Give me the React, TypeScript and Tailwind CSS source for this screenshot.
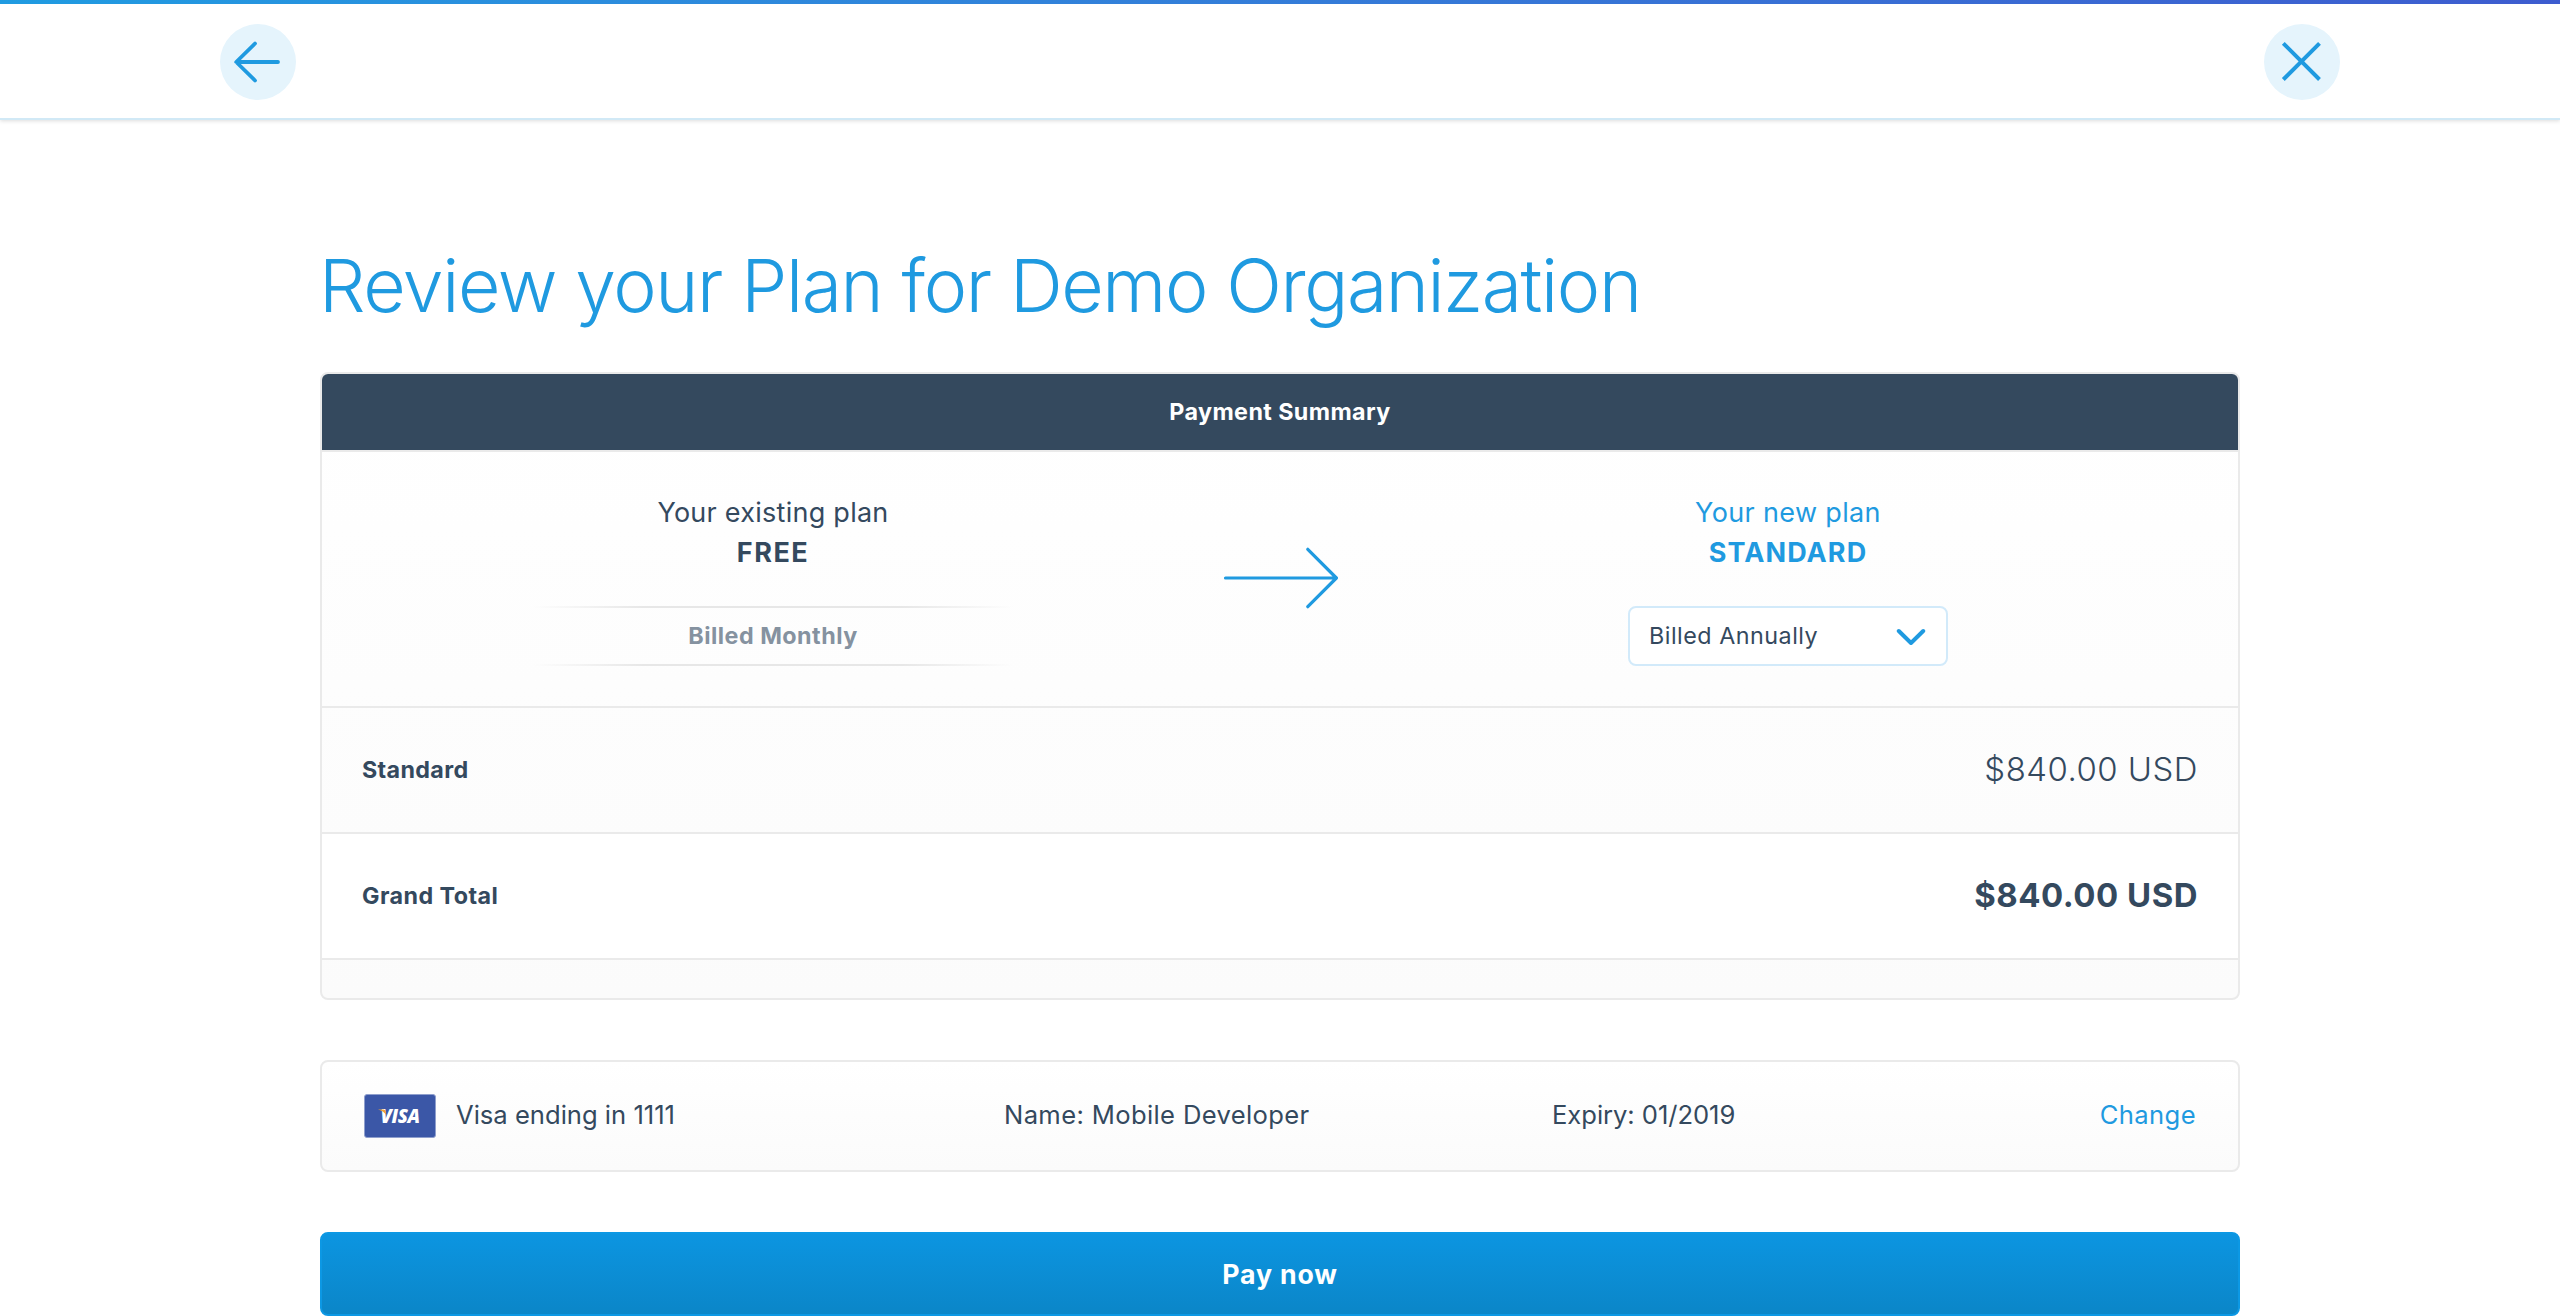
import React from "react";

function Header() {
  return (
    <header className="h-[120px] border-b-2 border-[#d1e9f6] bg-white shadow-[0_1px_4px_rgba(0,0,0,0.14)]">
      <div className="h-1 bg-linear-to-r from-[#1f9be1] to-[#3d5ccf]" />
      <div className="flex justify-between px-[220px] pt-5">
        <button aria-label="Back" className="size-[76px] rounded-full bg-[#e5f4fc]">
          <svg viewBox="0 0 76 76" className="size-full" fill="none" stroke="#1f9ae0" strokeWidth="3.8" strokeLinecap="round" strokeLinejoin="round">
            <path d="M35 19.5 16.2 38 35 56.5M16.5 38H58" />
          </svg>
        </button>
        <button aria-label="Close" className="size-[76px] rounded-full bg-[#e5f4fc]">
          <svg viewBox="0 0 76 76" className="size-full" fill="none" stroke="#1f9ae0" strokeWidth="4" strokeLinecap="butt">
            <path d="M19.3 19.3 55.5 55.5M55.5 19.3 19.3 55.5" />
          </svg>
        </button>
      </div>
    </header>
  );
}

function FadingRule() {
  return <div className="h-0.5 bg-[linear-gradient(90deg,transparent,#e7e7e7_23%,#e7e7e7_77%,transparent)]" />;
}

function PlanChange() {
  return (
    <div className="flex h-[258px] items-start border-y-2 border-[#eaeaea] pt-[41px]">
      <div className="flex w-[902px] flex-col items-center">
        <div className="text-[27px] leading-10 tracking-[0.26px]">Your existing plan</div>
        <div className="text-[27px] font-bold leading-10 tracking-[1.51px]">FREE</div>
        <div className="mt-[33px] flex h-[60px] w-[480px] flex-col">
          <FadingRule />
          <div className="flex-1 text-center text-[23.3px] font-bold leading-[56px] tracking-[0.49px] text-[#8592a0]">Billed Monthly</div>
          <FadingRule />
        </div>
      </div>
      <svg viewBox="0 0 116 64" className="-ml-0.5 mt-[53px] h-16 w-[116px]" fill="none" stroke="#1f9ae0" strokeWidth="3.2" strokeLinecap="round" strokeLinejoin="round">
        <path d="M3.5 32H114M85.8 3.3 114.4 32 85.8 60.7" />
      </svg>
      <div className="flex w-[900px] flex-col items-center text-[#1f9ae0]">
        <div className="text-[27px] leading-10 tracking-[0.35px]">Your new plan</div>
        <div className="text-[27px] font-bold leading-10 tracking-[1.1px]">STANDARD</div>
        <button className="mt-[33px] flex h-[60px] w-[320px] items-center justify-between rounded-lg border-2 border-[#d2eafa] bg-white pl-[19px] pr-5 text-[#34495e]">
          <span className="text-[23.3px] tracking-[0.51px]">Billed Annually</span>
          <svg viewBox="0 0 30 18" className="h-[18px] w-[30px]" fill="none" stroke="#1f9ae0" strokeWidth="4" strokeLinecap="round" strokeLinejoin="round">
            <path d="M2.8 4 15 16 27.2 4" />
          </svg>
        </button>
      </div>
    </div>
  );
}

function VisaLogo() {
  return (
    <span className="relative flex h-11 w-[72px] items-center justify-center rounded-[3px] border border-[#8f9fcd] bg-[#3b57a7]">
      <span className="font-['Open_Sans'] text-[18.5px] font-extrabold italic leading-none tracking-[-0.4px] text-white">VISA</span>
      <svg viewBox="0 0 10 8" className="absolute left-[13px] top-[14px] h-2 w-2.5">
        <path d="M0 0.6H5.5Q7.2 0.6 7.6 2.2L8.4 6.6Q6 2 0 0.6Z" fill="#f0a23a" />
      </svg>
    </span>
  );
}

export default function App() {
  return (
    <div className="h-[1316px] w-[2560px] overflow-hidden bg-white font-['Inter',sans-serif] text-[#34495e]">
      <Header />
      <main className="mx-auto w-[1920px] pt-[116px]">
        <h1 className="-ml-px text-[73.3px] font-light leading-[100px] tracking-[-1.38px] whitespace-nowrap text-[#1f9ae0]">
          Review your Plan for Demo Organization
        </h1>

        <section className="mt-9 h-[628px] overflow-hidden rounded-lg border-2 border-[#eaeaea] bg-linear-to-b from-white to-[#fbfbfb]">
          <h2 className="h-[76px] bg-[#34495e] text-center text-[23.3px] font-bold leading-[75px] tracking-[0.41px] text-white">
            Payment Summary
          </h2>
          <PlanChange />
          <div className="flex h-[126px] items-center justify-between border-b-2 border-[#eaeaea] px-10">
            <span className="text-[23.3px] font-bold tracking-[0.35px]">Standard</span>
            <span className="text-[32.9px] font-light tracking-[0.51px]">$840.00 USD</span>
          </div>
          <div className="flex h-[126px] items-center justify-between border-b-2 border-[#eaeaea] bg-white px-10">
            <span className="text-[23.3px] font-bold tracking-[0.45px]">Grand Total</span>
            <span className="text-[32.9px] font-bold tracking-[0.53px]">$840.00 USD</span>
          </div>
        </section>

        <section className="mt-[60px] flex h-28 rounded-lg border-2 border-[#eaeaea] bg-linear-to-b from-white to-[#fbfbfb] px-[42px] text-[25.6px] leading-[105px]">
          <div className="flex w-[640px] gap-5">
            <div className="pt-8">
              <VisaLogo />
            </div>
            <span>Visa ending in 1111</span>
          </div>
          <span className="w-[548px] tracking-[0.36px]">Name: Mobile Developer</span>
          <span className="tracking-[-0.05px]">Expiry: 01/2019</span>
          <a className="ml-auto tracking-[0.4px] text-[#1f9ae0]">Change</a>
        </section>

        <button className="mt-[60px] h-[84px] w-full rounded-lg border-2 border-[#0c98e4] bg-linear-to-b from-[#0c95e1] to-[#0b86c8] text-[26.7px] font-bold leading-[80px] tracking-[0.83px] text-white">
          Pay now
        </button>
      </main>
    </div>
  );
}
